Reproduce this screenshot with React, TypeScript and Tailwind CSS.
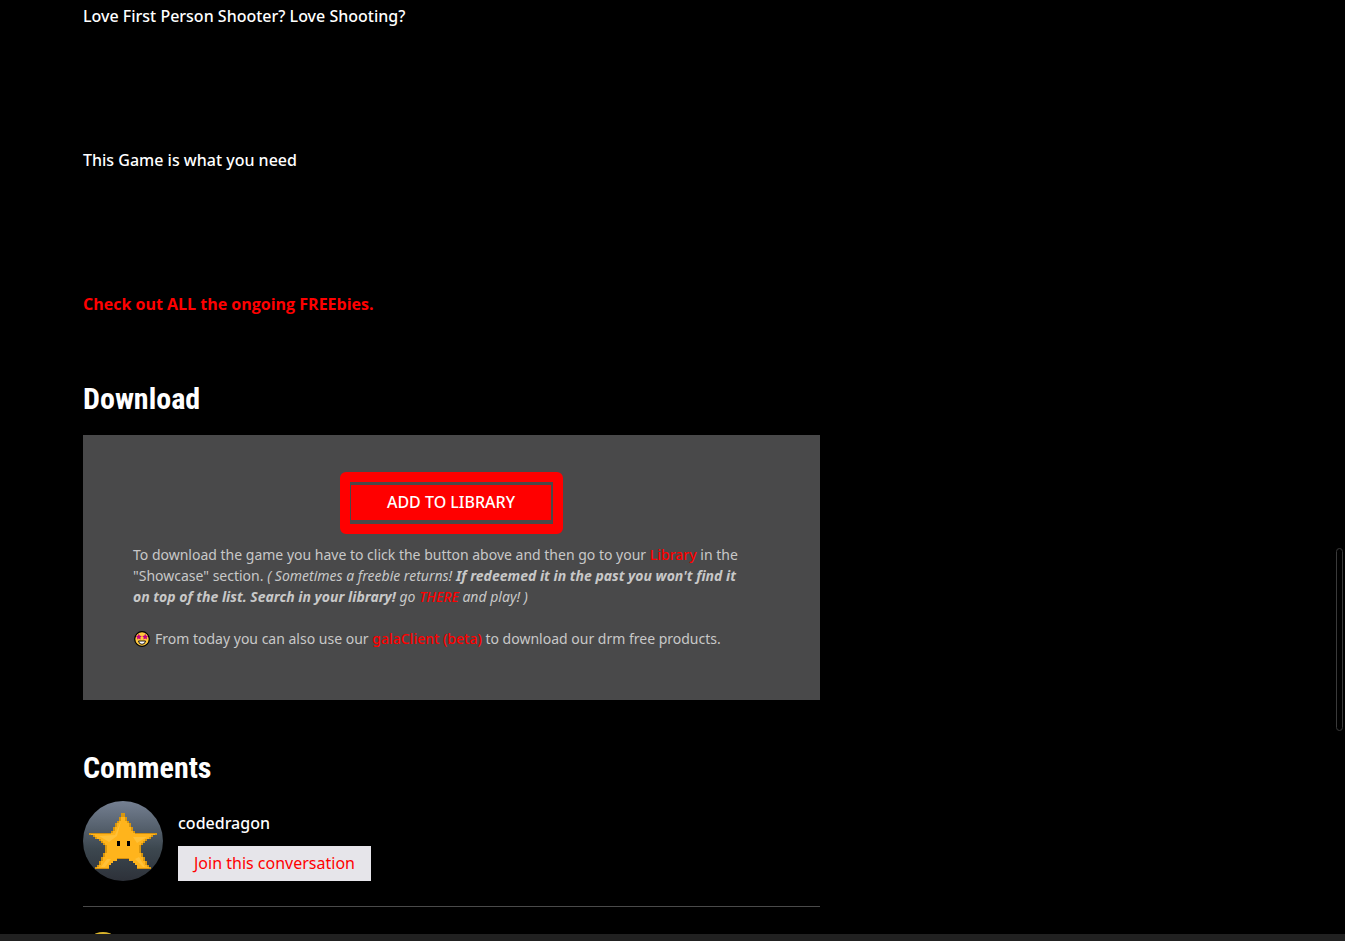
import React from 'react';

// Each entry is [row, inner half width, outer half width] on a 40 x 40 pixel grid
const starRows = [
  [6, 0, 1], [7, 0, 1], [8, 0, 2], [9, 0, 2], [10, 0, 3], [11, 0, 4], [12, 0, 4], [13, 0, 5],
  [14, 0, 5], [15, 0, 6], [16, 0, 17], [17, 0, 15], [18, 0, 14], [19, 0, 12], [20, 0, 11],
  [21, 0, 10], [22, 0, 9], [23, 0, 9], [24, 0, 9], [25, 0, 9], [26, 0, 10], [27, 0, 10],
  [28, 0, 11], [29, 3, 11], [30, 5, 12], [31, 6, 12], [32, 7, 13], [33, 7, 14],
];

function StarAvatar() {
  return (
    <svg className="w-20 h-20 shrink-0 rounded-full" viewBox="0 0 40 40" role="img" aria-label="codedragon">
      <defs>
        <linearGradient id="sky" x1="0" y1="0" x2="0" y2="1">
          <stop offset="0" stopColor="#758092" />
          <stop offset="0.6" stopColor="#3c474f" />
          <stop offset="1" stopColor="#2d3139" />
        </linearGradient>
      </defs>
      <rect width="40" height="40" fill="url(#sky)" />
      <g shapeRendering="crispEdges">
        {starRows.map(([y, inner, outer]) => (
          <g key={y}>
            <rect x={20 - outer} y={y} width={outer - inner} height="1" fill="#ffb41c" />
            <rect x={20 + inner} y={y} width={outer - inner} height="1" fill="#ffb41c" />
            <rect x={20 - outer} y={y} width="1" height="1" fill="#d8960f" />
            <rect x={19 + outer} y={y} width="1" height="1" fill="#d8960f" />
          </g>
        ))}
        <path d="M4 16h10v.5H4zM26 16h10v.5H26zM6 33.5h7v.5H6zM27 33.5h7v.5h-7zM17 28.5h6v.5h-6z" fill="#d3900f" />
        <path d="M17 20h1.5v2.5H17zM22 20h1.5v2.5H22z" fill="#000" />
      </g>
      <path d="M19 10l-3 7-8 .5 5 3 4-3zM25 18h7l-5 3zM12 29l-3 4h2l3-4zM26 29l4 4h1l-3-5z" fill="#ffca4d" opacity="0.6" />
    </svg>
  );
}

function StarStruck() {
  return (
    <svg className="inline-block w-[18px] h-[18px] mr-1 align-[-4px]" viewBox="0 0 18 18" role="img" aria-label="star-struck">
      <circle cx="9" cy="9" r="7.3" fill="#ffc83d" stroke="#000" strokeWidth="1.2" />
      <path d="M5.8 3.8l1 1.9 2 .3-1.5 1.4.4 2-1.9-1-1.8 1 .3-2L2.8 6l2-.3zM12.2 3.8l1 1.9 2 .3-1.5 1.4.4 2-1.9-1-1.8 1 .3-2L9.2 6l2-.3z" fill="#c30083" />
      <path d="M5.5 11h7q-.4 3.3-3.5 3.3T5.5 11z" fill="#fff" stroke="#000" strokeWidth="0.9" />
    </svg>
  );
}

export default function App() {
  return (
    <div className="relative flex flex-col h-screen overflow-hidden bg-black text-white font-['Noto_Sans',sans-serif] text-base">
      <main className="flex-1 min-h-0 overflow-hidden pl-[83px] pr-6 pt-1">
        <div className="max-w-[737px]">
          <div className="flex flex-col gap-[120px] font-medium">
            <p>Love First Person Shooter? Love Shooting?</p>
            <p>This Game is what you need</p>
            <p>
              <a href="#freebies" className="font-['Open_Sans',sans-serif] font-bold text-[#ff0000]">Check out ALL the ongoing FREEbies.</a>
            </p>
          </div>

          <h2 className="mt-[63px] text-[30px] leading-10 font-bold font-['Roboto_Condensed',sans-serif]">
            Download
          </h2>
          <section className="mt-4 bg-[#49494a] px-[50px] pt-[37px] pb-[51px] text-sm leading-[21px] text-[#c8c8c8]">
            <div className="flex justify-center">
              <div className="rounded-md border-10 border-[#ff0000] pl-px pr-[2px] pt-[3px] pb-1">
                <button type="button" className="block h-[35px] w-[200px] pb-[2px] bg-[#ff0000] text-base font-medium text-white">
                  ADD TO LIBRARY
                </button>
              </div>
            </div>
            <p className="mt-[10px]">
              To download the game you have to click the button above and then go to your{' '}
              <a href="#library" className="font-medium text-[#ff0000]">Library</a> in the <br />
              "Showcase" section.{' '}
              <em>
                ( Sometimes a freebie returns! <strong>If redeemed it in the past you won't find it<br />
                on top of the list. Search in your library!</strong> go{' '}
                <a href="#there" className="font-medium text-[#ff0000]">THERE</a> and play! )
              </em>
            </p>
            <p className="mt-[21px]">
              <StarStruck />
              From today you can also use our{' '}
              <a href="#client" className="font-medium text-[#ff0000]">galaClient (beta)</a> to download our drm free products.
            </p>
          </section>

          <h2 className="mt-12 text-[30px] leading-10 font-bold font-['Roboto_Condensed',sans-serif]">
            Comments
          </h2>
          <article className="mt-[13px] flex gap-[15px] border-b border-[#4a4a4a] pb-[25px]">
            <StarAvatar />
            <div className="pt-[10px]">
              <p className="font-medium">codedragon</p>
              <a href="#join" className="mt-[11px] block h-[35px] bg-[#e6e5ea] px-4 leading-[35px] text-[#ff0000]">
                Join this conversation
              </a>
            </div>
          </article>
          <article className="pt-[25px]">
            <div className="ml-[2px] h-9 w-9 rounded-full bg-[#d9b32b]" />
          </article>
        </div>
      </main>
      <footer className="h-[7px] shrink-0 bg-[#212121]" />
      <div className="absolute right-[2px] top-[548px] h-[183px] w-[7px] rounded-full border border-[#3a3a3a]" />
    </div>
  );
}
